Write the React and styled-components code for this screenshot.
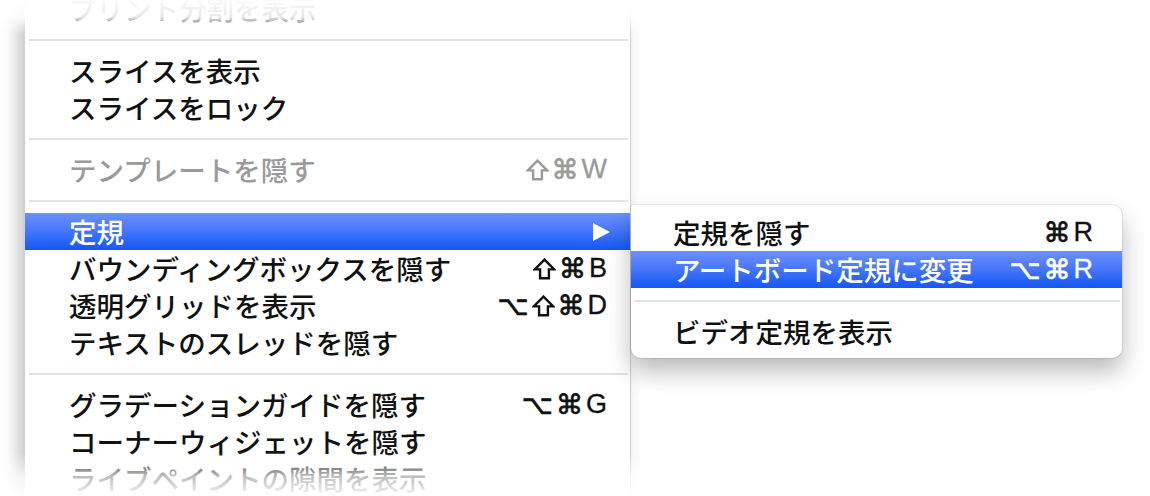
import React from "react";
import styled, { createGlobalStyle } from "styled-components";

const GlobalStyle = createGlobalStyle`
  html, body {
    margin: 0;
    padding: 0;
    background: #ffffff;
  }
`;

const mainItems = [
  { label: "プリント分割を表示" },
  { sep: true },
  { label: "スライスを表示" },
  { label: "スライスをロック" },
  { sep: true },
  { label: "テンプレートを隠す", shortcut: "⇧⌘W", disabled: true },
  { sep: true },
  { label: "定規", submenu: true, active: true },
  { label: "バウンディングボックスを隠す", shortcut: "⇧⌘B" },
  { label: "透明グリッドを表示", shortcut: "⌥⇧⌘D" },
  { label: "テキストのスレッドを隠す" },
  { sep: true },
  { label: "グラデーションガイドを隠す", shortcut: "⌥⌘G" },
  { label: "コーナーウィジェットを隠す" },
  { label: "ライブペイントの隙間を表示" },
];

const subItems = [
  { label: "定規を隠す", shortcut: "⌘R" },
  { label: "アートボード定規に変更", shortcut: "⌥⌘R", active: true },
  { sep: true },
  { label: "ビデオ定規を表示" },
];

// shift key drawn as an outlined arrow, the way the Mac menu font draws it
const ShiftIcon = () => (
  <svg width="23" height="22" viewBox="0 0 23 22">
    <path
      d="M11.5 1.6 L21.2 11.4 H15.9 V20.3 H7.1 V11.4 H1.8 Z"
      fill="none"
      stroke="currentColor"
      strokeWidth="2.4"
      strokeLinejoin="miter"
    />
  </svg>
);

const Keys = ({ text }) => (
  <Shortcut>
    {[...text].map((ch, i) =>
      ch === "⇧" ? (
        <ShiftIcon key={i} />
      ) : (
        <Key key={i} $symbol={ch === "⌘" || ch === "⌥"}>
          {ch}
        </Key>
      )
    )}
  </Shortcut>
);

const MenuItems = ({ items, padLeft, padRight }) =>
  items.map((item, i) =>
    item.sep ? (
      <Separator key={i} />
    ) : (
      <Row
        key={i}
        $active={item.active}
        $disabled={item.disabled}
        $padLeft={padLeft}
        $padRight={padRight}
      >
        <Label>{item.label}</Label>
        {item.shortcut && <Keys text={item.shortcut} />}
        {item.submenu && <Arrow />}
      </Row>
    )
  );

const App = () => {
  return (
    <>
      <GlobalStyle />
      <Stage>
        <MainMenu>
          <MenuItems items={mainItems} padLeft={44} padRight={23} />
        </MainMenu>
        <SubMenu>
          <MenuItems items={subItems} padLeft={42} padRight={29} />
        </SubMenu>
        <FadeTop />
        <FadeBottom />
      </Stage>
    </>
  );
};

const Stage = styled.div`
  position: relative;
  width: 1150px;
  height: 496px;
  overflow: hidden;
  display: flex;
  align-items: flex-start;
  padding-left: 25px;
  box-sizing: border-box;
  background: #ffffff;
`;

const MainMenu = styled.div`
  width: 605px;
  margin-top: -10px;
  padding-bottom: 40px;
  background: #ffffff;
  border-right: 1px solid #cfcfcf;
  box-shadow: -7px 0 16px rgba(0, 0, 0, 0.24);
  display: flex;
  flex-direction: column;
  flex-shrink: 0;
`;

const SubMenu = styled.div`
  width: 491px;
  margin-top: 205px;
  padding: 9px 0 8px;
  background: #ffffff;
  border-radius: 3px 10px 10px 10px;
  box-shadow: 0 13px 24px rgba(0, 0, 0, 0.28), 0 0 0 1px rgba(0, 0, 0, 0.07);
  display: flex;
  flex-direction: column;
  flex-shrink: 0;
  box-sizing: border-box;
  position: relative;
  z-index: 1;
`;

const Row = styled.div`
  height: 37px;
  display: flex;
  align-items: center;
  justify-content: space-between;
  padding: 0 ${(p) => p.$padRight}px 0 ${(p) => p.$padLeft}px;
  color: ${(p) => (p.$active ? "#ffffff" : p.$disabled ? "#9a9a9a" : "#111111")};
  background: ${(p) =>
    p.$active
      ? "linear-gradient(to bottom, #6d91fd 0%, #4a78fa 45%, #2563f7 80%, #1857f4 100%)"
      : "transparent"};
`;

const Label = styled.span`
  font-family: "Noto Sans CJK JP", "Noto Sans", sans-serif;
  font-size: 27.5px;
  font-weight: 500;
  line-height: 37px;
  white-space: nowrap;
`;

const Shortcut = styled.span`
  display: flex;
  align-items: center;
  gap: 3px;
  height: 37px;
`;

const Key = styled.span`
  font-family: ${(p) =>
    p.$symbol ? `"DejaVu Sans", sans-serif` : `"Liberation Sans", "DejaVu Sans", sans-serif`};
  font-size: ${(p) => (p.$symbol ? "27px" : "27px")};
  -webkit-text-stroke: ${(p) => (p.$symbol ? "0.7px" : "0.3px")} currentColor;
  line-height: 37px;
  white-space: nowrap;
`;

const Arrow = styled.span`
  width: 0;
  height: 0;
  margin-right: -3px;
  border-top: 9.5px solid transparent;
  border-bottom: 9.5px solid transparent;
  border-left: 17px solid #ffffff;
`;

const Separator = styled.div`
  height: 25px;
  display: flex;
  align-items: center;
  padding: 0 2px 0 4px;

  &::before {
    content: "";
    flex: 1;
    height: 2px;
    background: #e2e2e2;
  }
`;

const FadeTop = styled.div`
  position: absolute;
  left: 0;
  right: 0;
  top: 0;
  height: 34px;
  background: linear-gradient(
    to bottom,
    rgba(255, 255, 255, 0.98) 0%,
    rgba(255, 255, 255, 0.9) 50%,
    rgba(255, 255, 255, 0) 100%
  );
  pointer-events: none;
  z-index: 2;
`;

const FadeBottom = styled.div`
  position: absolute;
  left: 0;
  right: 0;
  bottom: 0;
  height: 44px;
  background: linear-gradient(
    to bottom,
    rgba(255, 255, 255, 0) 0%,
    rgba(255, 255, 255, 0.72) 55%,
    rgba(255, 255, 255, 0.96) 100%
  );
  pointer-events: none;
  z-index: 2;
`;

export default App;
